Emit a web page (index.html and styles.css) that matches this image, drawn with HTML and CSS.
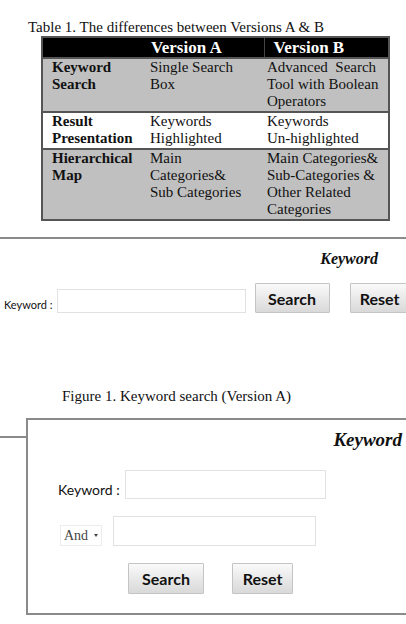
FILE: index.html
```html
<!DOCTYPE html>
<html>
<head>
    <title>Versions A &amp; B</title>
    <link rel="stylesheet" href="styles.css">
</head>
<body>
    <p class="caption table-caption">Table 1. The differences between Versions A &amp; B</p>
    <table class="versions">
        <colgroup>
            <col class="col-feature">
            <col class="col-a">
            <col class="col-b">
        </colgroup>
        <tr class="head">
            <th></th>
            <th>Version A</th>
            <th>Version B</th>
        </tr>
        <tr class="shade">
            <th>Keyword Search</th>
            <td>Single Search Box</td>
            <td>Advanced&nbsp; Search Tool with Boolean Operators</td>
        </tr>
        <tr>
            <th>Result Presentation</th>
            <td>Keywords Highlighted</td>
            <td>Keywords <span class="nowrap">Un-highlighted</span></td>
        </tr>
        <tr class="shade">
            <th>Hierarchical Map</th>
            <td>Main Categories&amp; Sub Categories</td>
            <td>Main Categories&amp; Sub-Categories &amp; Other Related Categories</td>
        </tr>
    </table>

    <!-- version A: one box -->
    <section class="simple">
        <div class="form-title">Keyword</div>
        <div class="simple-row">
            <label class="simple-label" for="kw-a">Keyword :</label>
            <input class="field simple-field" type="text" id="kw-a">
            <button class="btn search-a" type="button">Search</button>
            <button class="btn reset-a" type="button">Reset</button>
        </div>
    </section>
    <p class="caption figure-caption">Figure 1. Keyword search (Version A)</p>

    <!-- version B: boolean search -->
    <div class="advanced-wrap">
        <div class="stub"></div>
        <section class="advanced">
            <div class="form-title big">Keyword</div>
            <div class="adv-row">
                <label class="adv-label" for="kw-b1">Keyword :</label>
                <input class="field adv-field" type="text" id="kw-b1">
            </div>
            <div class="adv-row second">
                <div class="combo"><span>And</span><span class="caret"></span></div>
                <input class="field adv-field2" type="text" id="kw-b2">
            </div>
            <div class="adv-buttons">
                <button class="btn search-b" type="button">Search</button>
                <button class="btn reset-b" type="button">Reset</button>
            </div>
        </section>
    </div>
</body>
</html>
```

FILE: styles.css
```css
body {
    margin: 0;
    width: 406px;
    height: 624px;
    overflow: hidden;
    font-family: "Liberation Serif", serif;
    color: #111;
    background: #fff;
}

.caption {
    margin: 0;
    font-size: 15px;
    line-height: 17px;
}

.table-caption {
    padding: 19px 0 0 28px;
}

.nowrap {
    white-space: nowrap;
}

/* comparison table */
.versions {
    margin-left: 41px;
    width: 347px;
    border-collapse: collapse;
    table-layout: fixed;
    border: 2px solid #555;
    font-size: 15px;
    line-height: 17px;
}

.col-feature { width: 105px; }
.col-a { width: 117px; }
.col-b { width: 125px; }

.versions th,
.versions td {
    text-align: left;
    vertical-align: top;
    padding: 0 4px 1px 3px;
}

.versions tr {
    border-top: 2px solid #555;
}

.versions th {
    padding-left: 9px;
    font-weight: bold;
}

.versions td:nth-child(2) {
    padding-right: 14px;
}

.versions .head th {
    background: #000;
    color: #fff;
    font-size: 17px;
    line-height: 19px;
    padding-top: 0;
    padding-bottom: 0;
}

.versions .head th:nth-child(2) {
    padding-left: 4px;
    border-right: 1px solid #444;
}

.versions .shade {
    background: #c0c0c0;
}

/* search forms */
.form-title {
    text-align: right;
    font-family: "Liberation Serif", serif;
    font-style: italic;
    font-weight: bold;
    font-size: 16px;
    line-height: 20px;
}

.field {
    box-sizing: border-box;
    margin: 0;
    padding: 0;
    border: 1px solid #e2e2e2;
    background: #fff;
    flex-shrink: 0;
}

.btn {
    box-sizing: border-box;
    flex-shrink: 0;
    margin: 0;
    padding: 0;
    font-family: Lato, sans-serif;
    font-weight: bold;
    font-size: 16px;
    color: #111;
    border: 1px solid #c4c4c4;
    border-radius: 1px;
    background: linear-gradient(#fafafa, #e9e9e9 50%, #d9d9d9);
}

.simple {
    margin-top: 16px;
    border-top: 2px solid #8a8a8a;
    padding-top: 10px;
}

.simple .form-title {
    padding-right: 28px;
}

.simple-row {
    display: flex;
    align-items: flex-end;
    margin-top: 14px;
    padding-left: 4px;
}

.simple-label {
    flex-shrink: 0;
    white-space: nowrap;
    font-family: Lato, sans-serif;
    font-size: 11px;
    line-height: 14px;
    margin: 0 4px 1px 0;
}

.simple-field {
    width: 189px;
    height: 24px;
}

.search-a {
    margin-left: 9px;
    width: 75px;
    height: 30px;
}

.reset-a {
    margin-left: 20px;
    width: 60px;
    height: 30px;
}

.figure-caption {
    margin-top: 75px;
    padding-left: 62px;
}

.advanced-wrap {
    display: flex;
    align-items: flex-start;
    margin-top: 13px;
}

.stub {
    width: 26px;
    flex-shrink: 0;
    margin-top: 18px;
    border-top: 2px solid #8a8a8a;
}

.advanced {
    flex-shrink: 0;
    width: 394px;
    height: 197px;
    box-sizing: border-box;
    border: 2px solid #8a8a8a;
    padding: 8px 16px 0 0;
}

.form-title.big {
    font-size: 19px;
    line-height: 24px;
}

.adv-row {
    display: flex;
    align-items: flex-end;
    margin-top: 18px;
}

.adv-label {
    flex-shrink: 0;
    white-space: nowrap;
    font-family: Lato, sans-serif;
    font-size: 14px;
    line-height: 18px;
    margin: 0 5px 0 30px;
}

.adv-field {
    width: 201px;
    height: 29px;
}

.adv-row.second {
    margin-top: 17px;
}

.combo {
    box-sizing: border-box;
    display: flex;
    align-items: center;
    width: 42px;
    height: 21px;
    margin-left: 32px;
    padding-left: 3px;
    border: 1px solid #ececec;
    font-size: 14px;
    color: #444;
}

.caret {
    margin-left: 6px;
    border-left: 2px solid transparent;
    border-right: 2px solid transparent;
    border-top: 3px solid #444;
}

.adv-field2 {
    margin-left: 11px;
    width: 203px;
    height: 30px;
}

.adv-buttons {
    display: flex;
    margin: 17px 0 0 100px;
}

.search-b {
    width: 76px;
    height: 31px;
}

.reset-b {
    margin-left: 28px;
    width: 61px;
    height: 31px;
}
```
